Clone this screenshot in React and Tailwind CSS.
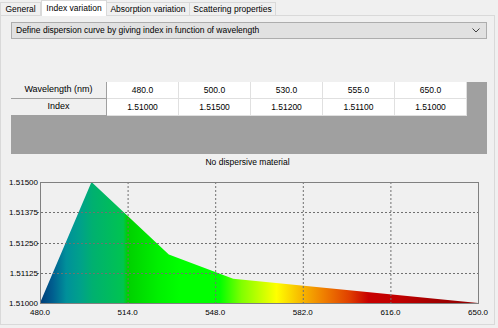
import React from "react";

const F = { fontFamily: '"Liberation Sans", Arial, sans-serif' };

function Tab({ label, active, w }) {
  return (
    <div
      className={
        active
          ? "h-[16px] -mb-[1px] bg-white border border-b-0 border-[#d9d9d9] flex items-center justify-center relative z-10"
          : "h-[13px] bg-[#f0f0f0] border border-b-0 border-[#d9d9d9] -ml-[1px] flex items-center justify-center"
      }
      style={{ width: w }}
    >
      <span className="text-[8.5px] text-black leading-none">{label}</span>
    </div>
  );
}

const wls = ["480.0", "500.0", "530.0", "555.0", "650.0"];
const idx = ["1.51000", "1.51500", "1.51200", "1.51100", "1.51000"];

function Chart() {
  const L = 39, T = 12, R = 477, B = 133;
  const X = (w) => L + ((w - 480) / 170) * (R - L);
  const Y = (n) => B - ((n - 1.51) / 0.005) * (B - T);
  const pts = [
    [480, 1.51],
    [500, 1.515],
    [530, 1.512],
    [555, 1.511],
    [650, 1.51],
  ]
    .map(([w, n]) => `${X(w).toFixed(1)},${Y(n).toFixed(1)}`)
    .join(" ");
  const vx = [514, 548, 582, 616];
  const hy = [1.51375, 1.5125, 1.51125];
  const yl = ["1.51500", "1.51375", "1.51250", "1.51125", "1.51000"];
  const xl = ["480.0", "514.0", "548.0", "582.0", "616.0", "650.0"];
  return (
    <svg width="493" height="152" className="block">
      <defs>
        <linearGradient id="spec" x1={L} x2={R} y1="0" y2="0" gradientUnits="userSpaceOnUse">
          <stop offset="0" stopColor="#003c78" />
          <stop offset="0.03" stopColor="#006090" />
          <stop offset="0.06" stopColor="#00909a" />
          <stop offset="0.09" stopColor="#00a08c" />
          <stop offset="0.12" stopColor="#00b070" />
          <stop offset="0.19" stopColor="#00c450" />
          <stop offset="0.2" stopColor="#00d000" />
          <stop offset="0.27" stopColor="#00f000" />
          <stop offset="0.32" stopColor="#00ff00" />
          <stop offset="0.41" stopColor="#00ff00" />
          <stop offset="0.46" stopColor="#80ff00" />
          <stop offset="0.5" stopColor="#c0ff00" />
          <stop offset="0.54" stopColor="#ffff00" />
          <stop offset="0.59" stopColor="#f8c000" />
          <stop offset="0.647" stopColor="#f08000" />
          <stop offset="0.706" stopColor="#e04000" />
          <stop offset="0.75" stopColor="#c80000" />
          <stop offset="0.82" stopColor="#c00000" />
          <stop offset="0.91" stopColor="#a00000" />
          <stop offset="1" stopColor="#900000" />
        </linearGradient>
      </defs>
      <polygon points={pts} fill="url(#spec)" />
      {vx.map((w) => (
        <line key={w} x1={X(w) + 0.5} x2={X(w) + 0.5} y1={T} y2={B} stroke="#707070" strokeWidth="1" strokeDasharray="2 2" />
      ))}
      {hy.map((n) => (
        <line key={n} x1={L - 3} x2={R} y1={Math.round(Y(n)) + 0.5} y2={Math.round(Y(n)) + 0.5} stroke="#707070" strokeWidth="1" strokeDasharray="2 2" />
      ))}
      <rect x={L + 0.5} y={T + 0.5} width={R - L} height={B - T} fill="none" stroke="#808080" strokeWidth="1" />
      {yl.map((t, i) => (
        <text key={t} x={L - 2} y={T + (i * (B - T)) / 4 + 3} textAnchor="end" fontSize="8" fill="#000" style={F}>
          {t}
        </text>
      ))}
      {xl.map((t, i) => (
        <text key={t} x={L + (i * (R - L)) / 5} y={B + 12} textAnchor="middle" fontSize="8" fill="#000" style={F}>
          {t}
        </text>
      ))}
    </svg>
  );
}

export default function App() {
  return (
    <div className="w-[498px] h-[328px] bg-[#f0f0f0] overflow-hidden" style={F}>
      <div className="flex items-end h-[15px] pl-[0px]">
        <div className="h-[13px] w-[41px] bg-[#f0f0f0] border border-b-0 border-[#d9d9d9] flex items-center justify-center">
          <span className="text-[8.5px] leading-none">General</span>
        </div>
        <Tab label="Index variation" active w={66} />
        <Tab label="Absorption variation" w={84} />
        <Tab label="Scattering properties" w={87} />
      </div>
      <div className="w-[495px] h-[310px] border border-[#d9d9d9] bg-[#f0f0f0] flex flex-col">
        <div className="mt-[6px] mx-[10px] h-[17px] w-[476px] bg-[#e1e1e1] border border-[#adadad] flex items-center justify-between pl-[4px] pr-[6px]">
          <span className="text-[8.5px] leading-none text-black">
            Define dispersion curve by giving index in function of wavelength
          </span>
          <svg width="8" height="5" viewBox="0 0 8 5">
            <path d="M0.5 0.5 L4 4 L7.5 0.5" fill="none" stroke="#404040" strokeWidth="1" />
          </svg>
        </div>
        <div className="mt-[43px] mx-[10px] w-[476px] h-[72px] bg-[#a0a0a0]">
          <div className="flex">
            <div className="w-[96px] h-[17px] bg-[#f0f0f0] border-r border-b border-[#a0a0a0] flex items-center justify-center text-[9px]">
              Wavelength (nm)
            </div>
            {wls.map((v) => (
              <div key={v} className="w-[72px] h-[17px] bg-white border-r border-b border-[#e0e0e0] flex items-center justify-center text-[8.5px]">
                {v}
              </div>
            ))}
          </div>
          <div className="flex">
            <div className="w-[96px] h-[17px] bg-[#f0f0f0] border-r border-b border-[#a0a0a0] flex items-center justify-center text-[9px]">
              Index
            </div>
            {idx.map((v, i) => (
              <div key={i} className="w-[72px] h-[17px] bg-white border-r border-b border-[#e0e0e0] flex items-center justify-center text-[8.5px]">
                {v}
              </div>
            ))}
          </div>
        </div>
        <div className="h-[16px] flex items-center justify-center text-[8.5px] text-black">
          No dispersive material
        </div>
        <Chart />
      </div>
    </div>
  );
}
